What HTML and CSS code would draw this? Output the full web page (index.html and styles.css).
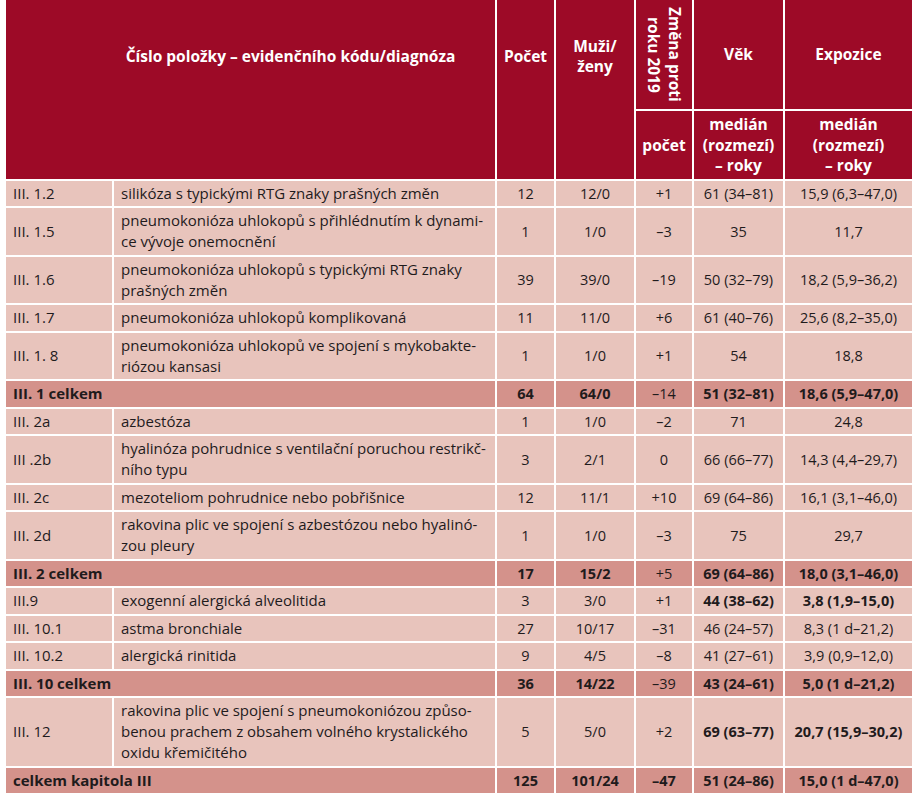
FILE: index.html
```html
<!DOCTYPE html>
<html lang="cs">
<head>
<meta charset="utf-8">
<title>Tabulka</title>
<link rel="stylesheet" href="styles.css">
</head>
<body>
<table class="t">
  <colgroup>
    <col class="c-code">
    <col class="c-diag">
    <col class="c-pocet">
    <col class="c-mz">
    <col class="c-zm">
    <col class="c-vek">
    <col class="c-exp">
  </colgroup>
  <thead>
    <tr class="h1">
      <th colspan="2" rowspan="2" class="hmain">Číslo položky – evidenčního kódu/diagnóza</th>
      <th rowspan="2" class="htop">Počet</th>
      <th rowspan="2" class="htop">Muži/<br>ženy</th>
      <th class="hrot"><div class="rot">Změna proti<br>roku 2019</div></th>
      <th>Věk</th>
      <th>Expozice</th>
    </tr>
    <tr class="h2">
      <th>počet</th>
      <th>medián<br>(rozmezí)<br>– roky</th>
      <th>medián<br>(rozmezí)<br>– roky</th>
    </tr>
  </thead>
  <tbody>
    <tr>
      <td class="code">III. 1.2</td>
      <td class="diag">silikóza s typickými RTG znaky prašných změn</td>
      <td class="n">12</td><td class="n">12/0</td><td class="n">+1</td><td class="n">61 (34–81)</td><td class="n">15,9 (6,3–47,0)</td>
    </tr>
    <tr>
      <td class="code">III. 1.5</td>
      <td class="diag">pneumokonióza uhlokopů s přihlédnutím k dynami-<br>ce vývoje onemocnění</td>
      <td class="n">1</td><td class="n">1/0</td><td class="n">–3</td><td class="n">35</td><td class="n">11,7</td>
    </tr>
    <tr>
      <td class="code">III. 1.6</td>
      <td class="diag">pneumokonióza uhlokopů s typickými RTG znaky<br>prašných změn</td>
      <td class="n">39</td><td class="n">39/0</td><td class="n">–19</td><td class="n">50 (32–79)</td><td class="n">18,2 (5,9–36,2)</td>
    </tr>
    <tr>
      <td class="code">III. 1.7</td>
      <td class="diag">pneumokonióza uhlokopů komplikovaná</td>
      <td class="n">11</td><td class="n">11/0</td><td class="n">+6</td><td class="n">61 (40–76)</td><td class="n">25,6 (8,2–35,0)</td>
    </tr>
    <tr>
      <td class="code">III. 1. 8</td>
      <td class="diag">pneumokonióza uhlokopů ve spojení s mykobakte-<br>riózou kansasi</td>
      <td class="n">1</td><td class="n">1/0</td><td class="n">+1</td><td class="n">54</td><td class="n">18,8</td>
    </tr>
    <tr class="total">
      <td colspan="2" class="code b">III. 1 celkem</td>
      <td class="n b">64</td><td class="n b">64/0</td><td class="n">–14</td><td class="n b">51 (32–81)</td><td class="n b">18,6 (5,9–47,0)</td>
    </tr>
    <tr>
      <td class="code">III. 2a</td>
      <td class="diag">azbestóza</td>
      <td class="n">1</td><td class="n">1/0</td><td class="n">–2</td><td class="n">71</td><td class="n">24,8</td>
    </tr>
    <tr>
      <td class="code">III .2b</td>
      <td class="diag">hyalinóza pohrudnice s ventilační poruchou restrikč-<br>ního typu</td>
      <td class="n">3</td><td class="n">2/1</td><td class="n">0</td><td class="n">66 (66–77)</td><td class="n">14,3 (4,4–29,7)</td>
    </tr>
    <tr>
      <td class="code">III. 2c</td>
      <td class="diag">mezoteliom pohrudnice nebo pobřišnice</td>
      <td class="n">12</td><td class="n">11/1</td><td class="n">+10</td><td class="n">69 (64–86)</td><td class="n">16,1 (3,1–46,0)</td>
    </tr>
    <tr>
      <td class="code">III. 2d</td>
      <td class="diag">rakovina plic ve spojení s azbestózou nebo hyalinó-<br>zou pleury</td>
      <td class="n">1</td><td class="n">1/0</td><td class="n">–3</td><td class="n">75</td><td class="n">29,7</td>
    </tr>
    <tr class="total">
      <td colspan="2" class="code b">III. 2 celkem</td>
      <td class="n b">17</td><td class="n b">15/2</td><td class="n">+5</td><td class="n b">69 (64–86)</td><td class="n b">18,0 (3,1–46,0)</td>
    </tr>
    <tr>
      <td class="code">III.9</td>
      <td class="diag">exogenní alergická alveolitida</td>
      <td class="n">3</td><td class="n">3/0</td><td class="n">+1</td><td class="n b">44 (38–62)</td><td class="n b">3,8 (1,9–15,0)</td>
    </tr>
    <tr>
      <td class="code">III. 10.1</td>
      <td class="diag">astma bronchiale</td>
      <td class="n">27</td><td class="n">10/17</td><td class="n">–31</td><td class="n">46 (24–57)</td><td class="n">8,3 (1 d–21,2)</td>
    </tr>
    <tr>
      <td class="code">III. 10.2</td>
      <td class="diag">alergická rinitida</td>
      <td class="n">9</td><td class="n">4/5</td><td class="n">–8</td><td class="n">41 (27–61)</td><td class="n">3,9 (0,9–12,0)</td>
    </tr>
    <tr class="total">
      <td colspan="2" class="code b">III. 10 celkem</td>
      <td class="n b">36</td><td class="n b">14/22</td><td class="n">–39</td><td class="n b">43 (24–61)</td><td class="n b">5,0 (1 d–21,2)</td>
    </tr>
    <tr>
      <td class="code">III. 12</td>
      <td class="diag">rakovina plic ve spojení s pneumokoniózou způso-<br>benou prachem z obsahem volného krystalického<br>oxidu křemičitého</td>
      <td class="n">5</td><td class="n">5/0</td><td class="n">+2</td><td class="n b">69 (63–77)</td><td class="n b">20,7 (15,9–30,2)</td>
    </tr>
    <tr class="total">
      <td colspan="2" class="code b">celkem kapitola III</td>
      <td class="n b">125</td><td class="n b">101/24</td><td class="n b">–47</td><td class="n b">51 (24–86)</td><td class="n b">15,0 (1 d–47,0)</td>
    </tr>
  </tbody>
</table>
</body>
</html>
```
FILE: styles.css
```css
html, body {
  margin: 0;
  padding: 0;
  background: #ffffff;
}

body {
  padding-left: 6px;
  font-family: "Open Sans", "Noto Sans", sans-serif;
}

.t {
  border-collapse: collapse;
  border-style: hidden;
  table-layout: fixed;
  width: 906px;
  font-size: 15px;
  line-height: 21px;
  color: #1f1b1c;
}

.c-code { width: 107px; }
.c-diag { width: 383px; }
.c-pocet { width: 59px; }
.c-mz { width: 80px; }
.c-zm { width: 58px; }
.c-vek { width: 91px; }
.c-exp { width: 128px; }

.t th,
.t td {
  border: 2px solid #ffffff;
  padding: 2px 7px 2.5px;
  vertical-align: middle;
}

.t th {
  background: #9d0a27;
  color: #ffffff;
  font-weight: 700;
  font-size: 15.5px;
  line-height: 20.5px;
  text-align: center;
  padding: 3px 2px;
}

.h1 { height: 110px; }
.h2 { height: 68px; }

.t th.hmain {
  padding-left: 82px;
  padding-bottom: 69px;
}

.t th.htop {
  padding-bottom: 69px;
}

.t th.hrot {
  padding: 0;
}

.rot {
  writing-mode: vertical-rl;
  text-align: center;
  height: 100px;
  margin: 0 auto;
}

.t td {
  background: #e8c4bc;
}

.t tr.total td {
  background: #d4928b;
}

.t td.code {
  text-align: left;
  white-space: nowrap;
}

.t td.diag {
  text-align: left;
  white-space: nowrap;
}

.t td.n {
  font-size: 14.5px;
  text-align: center;
  white-space: nowrap;
  padding-left: 2px;
  padding-right: 2px;
}

.b {
  font-weight: 700;
}
```
